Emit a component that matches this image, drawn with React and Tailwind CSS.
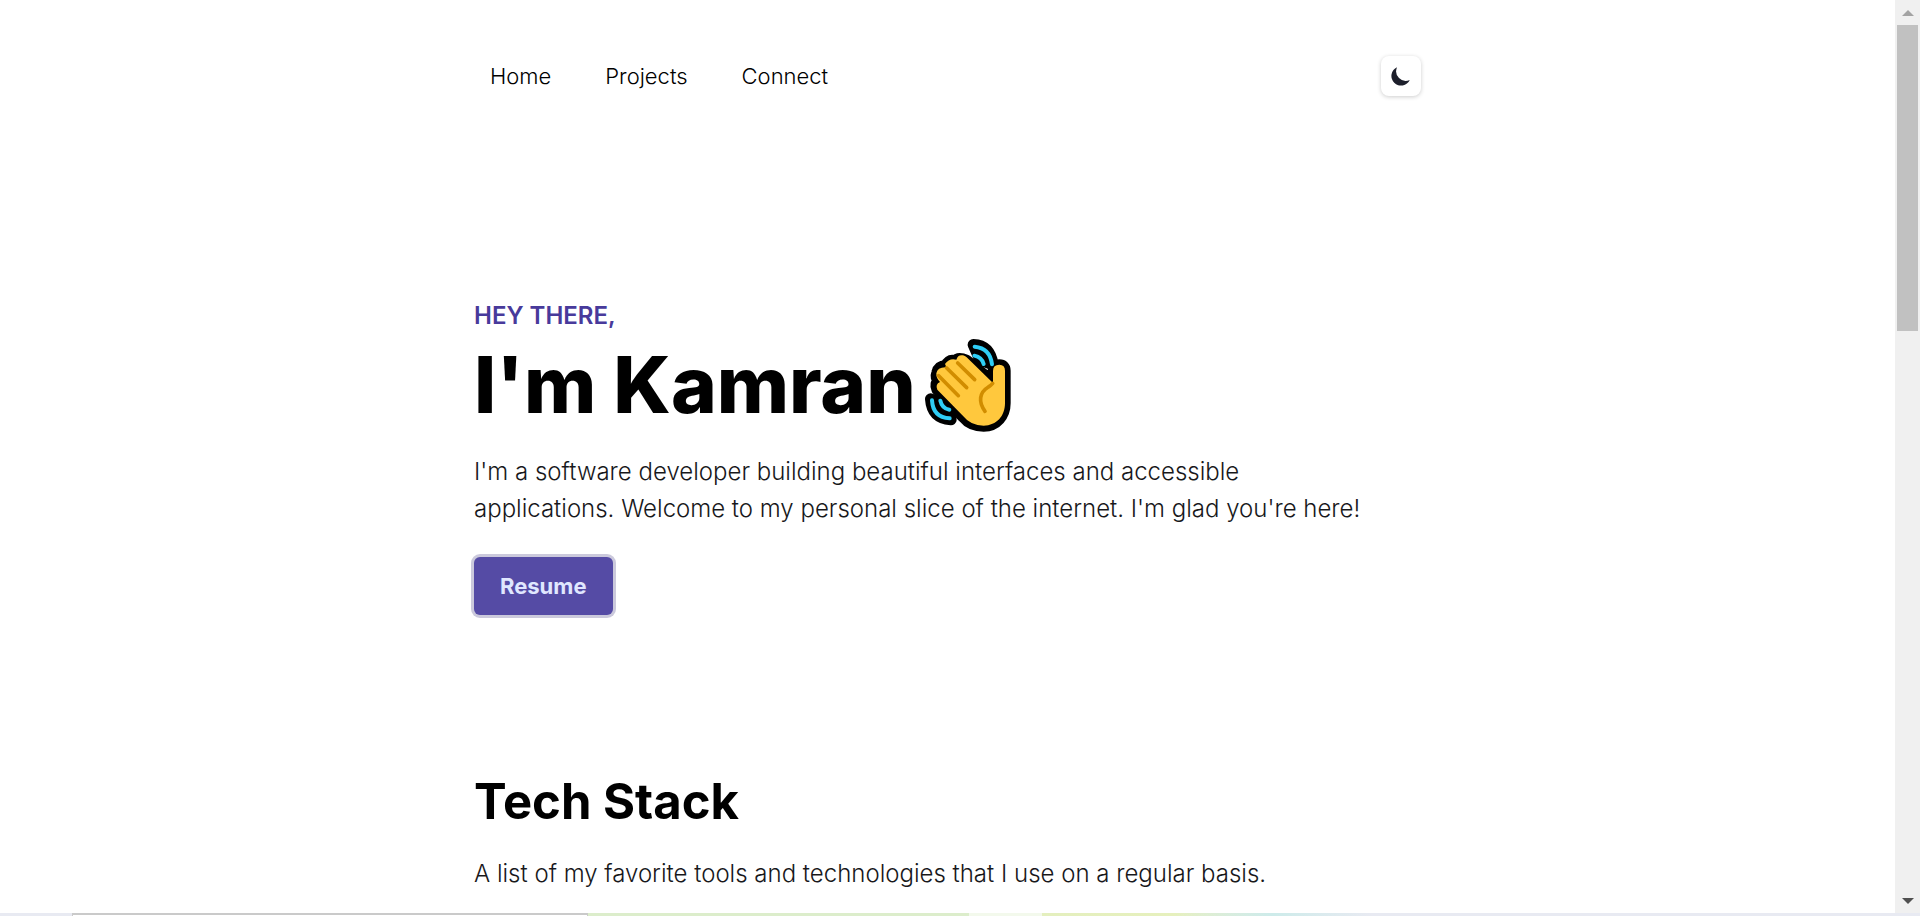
const links = ["Home", "Projects", "Connect"];

function MoonIcon() {
  return (
    <svg viewBox="0 0 20 20" className="h-6 w-6" fill="#1d1f2b" aria-hidden="true">
      <path d="M17.293 13.293A8 8 0 016.707 2.707a8.001 8.001 0 1010.586 10.586z" />
    </svg>
  );
}

function WavingHand() {
  return (
    <svg viewBox="64 52 264 282" className="h-[94px] w-[88px]" role="img" aria-label="Waving hand">
      <g strokeLinecap="round" strokeLinejoin="round" fill="none">
        <g stroke="#000" fill="#000">
          <path d="M212 72Q262 74 271 132L232 118Z" strokeWidth="34" />
          <path d="M84 235Q88 292 145 297L120 250Z" strokeWidth="34" />
          <path
            d="M180 116Q165 112 158 122Q140 116 130 136Q108 137 104 156Q98 172 110 180Q96 188 104 206L183 289Q204 315 243 315C282 315 306 284 306 248V150Q306 134 290 134Q274 134 273 150V187L191 120Z"
            strokeWidth="36"
          />
        </g>
        <path
          d="M181 104Q166 101 161 117Q140 111 127 130Q132 137 128 140Q104 140 101 158Q100 172 112 184Q97 190 104 207L182 287Q204 315 243 315C282 315 307 286 307 248V150Q307 132 290 132Q271 132 271 151V187L192 110Q187 105 181 104Z"
          fill="#ffc83d"
        />
        <g stroke="#d18d00" strokeWidth="11">
          <path d="M165 127L216 177" />
          <path d="M132 142L192 201" />
          <path d="M108 165L167 225" />
          <path d="M270 188Q263 196 257 199C229 216 227 244 247 272" />
        </g>
        <g stroke="#2fcdf5" strokeWidth="12">
          <path d="M216 78Q262 82 268 131" />
          <path d="M215 105Q238 110 243 130" />
          <path d="M88 239Q91 290 141 293" />
          <path d="M113 240Q118 264 140 267" />
        </g>
      </g>
    </svg>
  );
}

function ScrollBar() {
  return (
    <div className="flex w-[25px] shrink-0 flex-col items-center bg-[#f0f0f0]" aria-hidden="true">
      <div className="flex h-[25px] items-center justify-center">
        <svg viewBox="0 0 12 6" className="h-1.5 w-3" fill="#a3a3a3">
          <path d="M6 0L12 6H0Z" />
        </svg>
      </div>
      <div className="h-[306px] w-[21px] bg-[#c1c1c1]" />
      <div className="mt-auto flex h-6 items-center justify-center">
        <svg viewBox="0 0 12 6" className="h-1.5 w-3" fill="#505050">
          <path d="M0 0H12L6 6Z" />
        </svg>
      </div>
    </div>
  );
}

function BottomStrip() {
  return (
    <div className="flex h-[3px] w-full shrink-0 bg-[#e8eaf2]" aria-hidden="true">
      <div className="w-[3.75%]" />
      <div className="w-[26.9%] border-x border-t-2 border-[#cacaca] bg-white" />
      <div className="w-[19.8%] bg-[#dcedcb]" />
      <div className="w-[3.8%] bg-[#f3f9ec]" />
      <div className="w-[17.2%] bg-linear-to-r from-[#e4efbe] via-[#e6f0bd] via-40% to-[#e8eaf2]">
        <div className="ml-auto h-full w-3/5 bg-linear-to-r from-transparent via-[#cdebea] to-[#e8eaf2]" />
      </div>
    </div>
  );
}

export default function App() {
  return (
    <div className="flex h-screen flex-col overflow-hidden bg-white font-['Inter',sans-serif] text-black">
      <div className="flex min-h-0 flex-1">
        <div className="min-w-0 flex-1 overflow-hidden">
          <div className="mx-auto max-w-[947px]">
            <header className="flex items-center justify-between pt-14">
              <nav className="flex gap-[22px]">
                {links.map((l) => (
                  <a key={l} href={`#${l.toLowerCase()}`} className="px-4 text-[22px] leading-8 font-light">
                    {l}
                  </a>
                ))}
              </nav>
              <button
                type="button"
                aria-label="Toggle dark mode"
                className="flex h-10 w-10 items-center justify-center rounded-lg bg-white shadow-[0_1px_4px_rgba(0,0,0,0.2)]"
              >
                <MoonIcon />
              </button>
            </header>
            <main>
              <section id="home" className="pt-[202px]">
                <p className="text-2xl leading-9 font-semibold text-[#483a9b] uppercase">Hey there,</p>
                <div className="flex items-center gap-2">
                  <h1 className="text-[78px] leading-[102px] font-extrabold">I'm Kamran</h1>
                  <WavingHand />
                </div>
                <p className="mt-[17px] max-w-[910px] text-2xl leading-[37px] font-light text-[#18181b]">
                  I'm a software developer building beautiful interfaces and accessible applications. Welcome to my
                  personal slice of the internet. I'm glad you're here!
                </p>
                <a
                  href="#resume"
                  className="mt-[30px] inline-block rounded-md bg-[#554ba5] px-[26px] py-[13px] text-[22px] leading-8 font-bold text-[#e0e7ff] ring-3 ring-[#cbc9dc]"
                >
                  Resume
                </a>
              </section>
              <section id="projects" className="pt-[151px]">
                <h2 className="text-[49px] leading-[72px] font-bold">Tech Stack</h2>
                <p className="mt-[17px] max-w-[910px] text-2xl leading-[37px] font-light text-[#18181b]">
                  A list of my favorite tools and technologies that I use on a regular basis.
                </p>
              </section>
            </main>
          </div>
        </div>
        <ScrollBar />
      </div>
      <BottomStrip />
    </div>
  );
}
